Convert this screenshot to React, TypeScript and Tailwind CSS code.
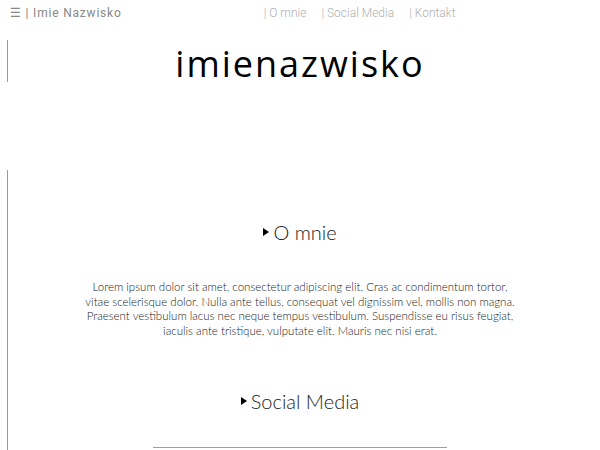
import React from 'react';

const Marker = () => (
  <span className="inline-block w-0 h-0 mr-[4px] border-y-[4px] border-y-transparent border-l-[6px] border-l-black align-middle" />
);

const Section: React.FC<{ title: string; children?: React.ReactNode }> = ({ title, children }) => (
  <div className="flex flex-col items-center">
    <h2 className="flex items-center text-[20px] leading-[24px] font-light text-[#222]">
      <Marker />
      {title}
    </h2>
    {children}
  </div>
);

export default function App() {
  return (
    <div className="w-[600px] h-[450px] overflow-hidden bg-white" style={{ fontFamily: 'Lato, "Open Sans", sans-serif' }}>
      <header className="h-[26px] flex items-center pl-[10px]" style={{ fontFamily: 'Roboto, sans-serif' }}>
        <span className="text-[12px] tracking-[0.8px] text-[#888]">☰ | Imie Nazwisko</span>
        <nav className="ml-[142px] flex gap-[15px] text-[12px] font-light text-[#b0b0b0]">
          <span>| O mnie</span>
          <span>| Social Media</span>
          <span>| Kontakt</span>
        </nav>
      </header>

      <div className="mt-[14px] ml-[7px] h-[42px] border-l border-[#999]">
        <div className="-ml-[8px] flex justify-center">
          <h1
            className="pt-[3px] text-[36px] leading-[42px] tracking-[2px] text-black"
            style={{ fontFamily: '"Open Sans", sans-serif' }}
          >
            imienazwisko
          </h1>
        </div>
      </div>

      <main className="mt-[88px] ml-[7px] h-[400px] border-l border-[#999]">
        <div className="-ml-[8px] pt-[50px] flex flex-col items-center">
          <Section title="O mnie">
            <p className="mt-[36px] w-[440px] text-center text-[11.5px] leading-[14.5px] font-light text-[#222]">
              Lorem ipsum dolor sit amet, consectetur adipiscing elit. Cras ac condimentum tortor, vitae scelerisque dolor. Nulla ante tellus, consequat vel dignissim vel, mollis non magna. Praesent vestibulum lacus nec neque tempus vestibulum. Suspendisse eu risus feugiat, iaculis ante tristique, vulputate elit. Mauris nec nisi erat.
            </p>
          </Section>
          <div className="mt-[51px]">
            <Section title="Social Media" />
          </div>
          <div className="mt-[34px] w-[294px] border-t border-[#8fa2b8] h-[20px]" />
        </div>
      </main>
    </div>
  );
}
